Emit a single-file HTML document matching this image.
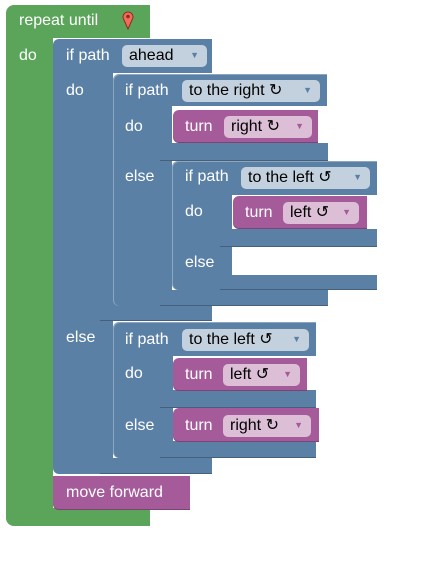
<!DOCTYPE html>
<html><head><meta charset="utf-8"><style>
body{margin:0;width:435px;height:583px;background:#fff;position:relative;overflow:hidden;font-family:"Liberation Sans",Arial,sans-serif;}
.r{position:absolute}
.g{background:#5ba55b}
.b{background:#5b80a5}
.p{background:#a55b99}
.w{background:#fff}
.t{position:absolute;color:#fff;font-size:16px;line-height:20px;white-space:nowrap}
.d{position:absolute;border-radius:5px;font-size:16px;line-height:21px;height:22px;color:#000;white-space:nowrap;padding-left:7px;box-sizing:border-box}
.db{background:#c3d1de}
.dp{background:#dcbfd7}
.d i{font-style:normal;font-size:9px;position:absolute;right:8px;top:0;color:#5b80a5}
.dp i{color:#a55b99}
.sh{box-shadow:inset 0 -1px 0 rgba(0,0,0,.25)}
</style></head><body>
<!-- green -->
<div class="r g" style="left:6px;top:5px;width:144px;height:33px;border-radius:8px 0 0 0"></div>
<div class="r g" style="left:6px;top:30px;width:47px;height:496px;border-radius:0 0 0 8px"></div>
<div class="r g" style="left:40px;top:508px;width:110px;height:18px"></div>
<div class="t" style="left:19px;top:11px">repeat until</div>
<svg class="r" style="left:121px;top:10px" width="14" height="20" viewBox="0 0 14 20"><path d="M7 19 L3 10 A5 5 0 1 1 11 10 Z" fill="#f26b5b" stroke="#8b2a1e" stroke-width="1"/><circle cx="7" cy="6.5" r="1.8" fill="#8b2a1e"/></svg>
<div class="t" style="left:19px;top:46px">do</div>
<!-- blue1 -->
<div class="r b" style="left:53px;top:39px;width:159px;height:34px;border-radius:6px 0 0 0"></div>
<div class="r b" style="left:53px;top:60px;width:60px;height:414px;border-radius:0 0 0 6px"></div>
<div class="r b sh" style="left:100px;top:300px;width:112px;height:21px"></div>
<div class="r b sh" style="left:100px;top:458px;width:112px;height:16px"></div>
<div class="t" style="left:66px;top:46px">if path</div>
<div class="d db" style="left:122px;top:45px;width:85px">ahead<i>▼</i></div>
<div class="t" style="left:66px;top:81px">do</div>
<div class="t" style="left:66px;top:328px">else</div>
<!-- block2 -->
<div class="r b" style="left:113px;top:74px;width:214px;height:32px;border-radius:6px 0 0 0;box-shadow:inset 1px 1px 0 rgba(255,255,255,.3)"></div>
<div class="r b" style="left:113px;top:100px;width:59px;height:206px;border-radius:0 0 0 6px;box-shadow:inset 1px 0 0 rgba(255,255,255,.3)"></div>
<div class="r b sh" style="left:160px;top:143px;width:168px;height:18px"></div>
<div class="r b sh" style="left:160px;top:290px;width:168px;height:16px"></div>
<div class="t" style="left:125px;top:81px">if path</div>
<div class="d db" style="left:182px;top:80px;width:138px">to the right ↻<i>▼</i></div>
<div class="t" style="left:125px;top:117px">do</div>
<div class="t" style="left:125px;top:167px">else</div>
<div class="r p sh" style="left:173px;top:110px;width:145px;height:33px;border-radius:6px 0 0 6px"></div>
<div class="t" style="left:185px;top:117px">turn</div>
<div class="d dp" style="left:224px;top:116px;width:88px">right ↻<i>▼</i></div>
<!-- block4 -->
<div class="r b" style="left:172px;top:161px;width:205px;height:34px;border-radius:6px 0 0 0;box-shadow:inset 1px 1px 0 rgba(255,255,255,.3)"></div>
<div class="r b" style="left:172px;top:185px;width:60px;height:105px;border-radius:0 0 0 6px;box-shadow:inset 1px 0 0 rgba(255,255,255,.3)"></div>
<div class="r b sh" style="left:220px;top:229px;width:157px;height:18px"></div>
<div class="r b sh" style="left:220px;top:275px;width:157px;height:15px"></div>
<div class="r w" style="left:232px;top:247px;width:145px;height:28px;border-radius:6px 0 0 6px"></div>
<div class="t" style="left:185px;top:167px">if path</div>
<div class="d db" style="left:241px;top:167px;width:129px">to the left ↺<i>▼</i></div>
<div class="t" style="left:185px;top:202px">do</div>
<div class="t" style="left:185px;top:253px">else</div>
<div class="r p sh" style="left:233px;top:196px;width:134px;height:33px;border-radius:6px 0 0 6px"></div>
<div class="t" style="left:245px;top:203px">turn</div>
<div class="d dp" style="left:283px;top:202px;width:76px">left ↺<i>▼</i></div>
<!-- block3 -->
<div class="r b" style="left:113px;top:322px;width:203px;height:34px;border-radius:6px 0 0 0;box-shadow:inset 1px 1px 0 rgba(255,255,255,.3)"></div>
<div class="r b" style="left:113px;top:345px;width:60px;height:113px;border-radius:0 0 0 6px;box-shadow:inset 1px 0 0 rgba(255,255,255,.3)"></div>
<div class="r b sh" style="left:160px;top:390px;width:156px;height:18px"></div>
<div class="r b sh" style="left:160px;top:441px;width:156px;height:17px"></div>
<div class="t" style="left:125px;top:330px">if path</div>
<div class="d db" style="left:182px;top:329px;width:127px">to the left ↺<i>▼</i></div>
<div class="t" style="left:125px;top:364px">do</div>
<div class="t" style="left:125px;top:416px">else</div>
<div class="r p sh" style="left:173px;top:358px;width:134px;height:33px;border-radius:6px 0 0 6px"></div>
<div class="t" style="left:185px;top:365px">turn</div>
<div class="d dp" style="left:223px;top:364px;width:77px">left ↺<i>▼</i></div>
<div class="r p sh" style="left:173px;top:408px;width:146px;height:34px;border-radius:6px 0 0 6px"></div>
<div class="t" style="left:185px;top:416px">turn</div>
<div class="d dp" style="left:223px;top:415px;width:88px">right ↻<i>▼</i></div>
<!-- move forward -->
<div class="r p sh" style="left:53px;top:476px;width:137px;height:34px;border-radius:0 0 0 6px"></div>
<div class="t" style="left:66px;top:483px">move forward</div>
</body></html>
